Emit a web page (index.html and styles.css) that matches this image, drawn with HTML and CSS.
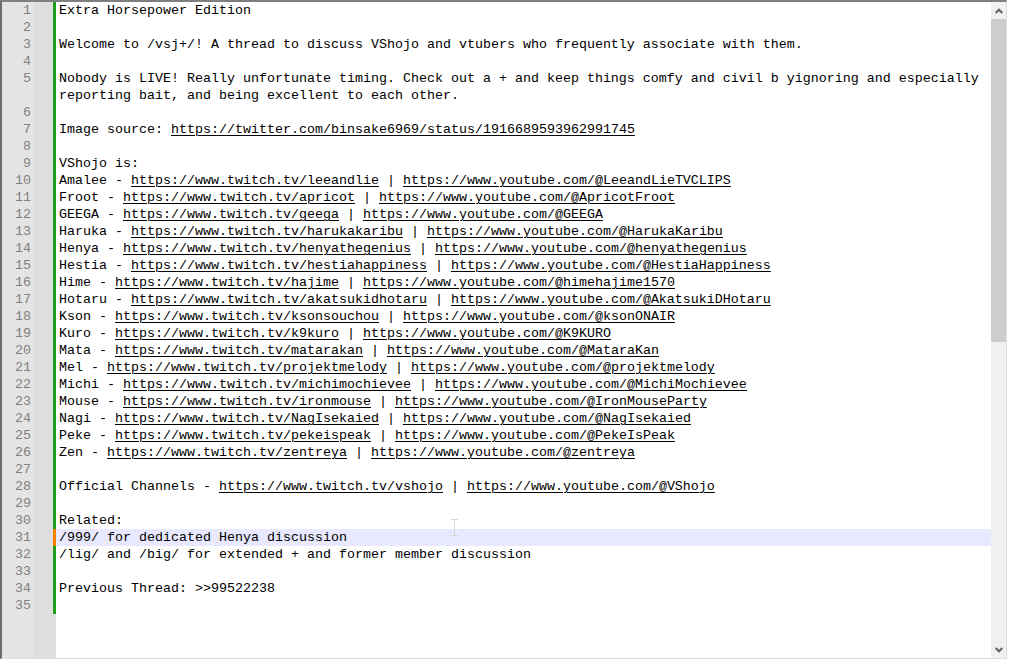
FILE: index.html
```html
<!DOCTYPE html>
<html>
<head>
<meta charset="utf-8">
<link rel="stylesheet" href="styles.css">
</head>
<body>
<div class="window">
  <div class="editor">
    <div class="line saved"><span class="num">1</span><span class="fold"></span><span class="bar"></span><span class="text">Extra Horsepower Edition</span></div>
    <div class="line saved"><span class="num">2</span><span class="fold"></span><span class="bar"></span><span class="text"></span></div>
    <div class="line saved"><span class="num">3</span><span class="fold"></span><span class="bar"></span><span class="text">Welcome to /vsj+/! A thread to discuss VShojo and vtubers who frequently associate with them.</span></div>
    <div class="line saved"><span class="num">4</span><span class="fold"></span><span class="bar"></span><span class="text"></span></div>
    <div class="line saved"><span class="num">5</span><span class="fold"></span><span class="bar"></span><span class="text">Nobody is LIVE! Really unfortunate timing. Check out a + and keep things comfy and civil b yignoring and especially<br>reporting bait, and being excellent to each other.</span></div>
    <div class="line saved"><span class="num">6</span><span class="fold"></span><span class="bar"></span><span class="text"></span></div>
    <div class="line saved"><span class="num">7</span><span class="fold"></span><span class="bar"></span><span class="text">Image source: <u>https://twitter.com/binsake6969/status/1916689593962991745</u></span></div>
    <div class="line saved"><span class="num">8</span><span class="fold"></span><span class="bar"></span><span class="text"></span></div>
    <div class="line saved"><span class="num">9</span><span class="fold"></span><span class="bar"></span><span class="text">VShojo is:</span></div>
    <div class="line saved"><span class="num">10</span><span class="fold"></span><span class="bar"></span><span class="text">Amalee - <u>https://www.twitch.tv/leeandlie</u> | <u>https://www.youtube.com/@LeeandLieTVCLIPS</u></span></div>
    <div class="line saved"><span class="num">11</span><span class="fold"></span><span class="bar"></span><span class="text">Froot - <u>https://www.twitch.tv/apricot</u> | <u>https://www.youtube.com/@ApricotFroot</u></span></div>
    <div class="line saved"><span class="num">12</span><span class="fold"></span><span class="bar"></span><span class="text">GEEGA - <u>https://www.twitch.tv/geega</u> | <u>https://www.youtube.com/@GEEGA</u></span></div>
    <div class="line saved"><span class="num">13</span><span class="fold"></span><span class="bar"></span><span class="text">Haruka - <u>https://www.twitch.tv/harukakaribu</u> | <u>https://www.youtube.com/@HarukaKaribu</u></span></div>
    <div class="line saved"><span class="num">14</span><span class="fold"></span><span class="bar"></span><span class="text">Henya - <u>https://www.twitch.tv/henyathegenius</u> | <u>https://www.youtube.com/@henyathegenius</u></span></div>
    <div class="line saved"><span class="num">15</span><span class="fold"></span><span class="bar"></span><span class="text">Hestia - <u>https://www.twitch.tv/hestiahappiness</u> | <u>https://www.youtube.com/@HestiaHappiness</u></span></div>
    <div class="line saved"><span class="num">16</span><span class="fold"></span><span class="bar"></span><span class="text">Hime - <u>https://www.twitch.tv/hajime</u> | <u>https://www.youtube.com/@himehajime1570</u></span></div>
    <div class="line saved"><span class="num">17</span><span class="fold"></span><span class="bar"></span><span class="text">Hotaru - <u>https://www.twitch.tv/akatsukidhotaru</u> | <u>https://www.youtube.com/@AkatsukiDHotaru</u></span></div>
    <div class="line saved"><span class="num">18</span><span class="fold"></span><span class="bar"></span><span class="text">Kson - <u>https://www.twitch.tv/ksonsouchou</u> | <u>https://www.youtube.com/@ksonONAIR</u></span></div>
    <div class="line saved"><span class="num">19</span><span class="fold"></span><span class="bar"></span><span class="text">Kuro - <u>https://www.twitch.tv/k9kuro</u> | <u>https://www.youtube.com/@K9KURO</u></span></div>
    <div class="line saved"><span class="num">20</span><span class="fold"></span><span class="bar"></span><span class="text">Mata - <u>https://www.twitch.tv/matarakan</u> | <u>https://www.youtube.com/@MataraKan</u></span></div>
    <div class="line saved"><span class="num">21</span><span class="fold"></span><span class="bar"></span><span class="text">Mel - <u>https://www.twitch.tv/projektmelody</u> | <u>https://www.youtube.com/@projektmelody</u></span></div>
    <div class="line saved"><span class="num">22</span><span class="fold"></span><span class="bar"></span><span class="text">Michi - <u>https://www.twitch.tv/michimochievee</u> | <u>https://www.youtube.com/@MichiMochievee</u></span></div>
    <div class="line saved"><span class="num">23</span><span class="fold"></span><span class="bar"></span><span class="text">Mouse - <u>https://www.twitch.tv/ironmouse</u> | <u>https://www.youtube.com/@IronMouseParty</u></span></div>
    <div class="line saved"><span class="num">24</span><span class="fold"></span><span class="bar"></span><span class="text">Nagi - <u>https://www.twitch.tv/NagIsekaied</u> | <u>https://www.youtube.com/@NagIsekaied</u></span></div>
    <div class="line saved"><span class="num">25</span><span class="fold"></span><span class="bar"></span><span class="text">Peke - <u>https://www.twitch.tv/pekeispeak</u> | <u>https://www.youtube.com/@PekeIsPeak</u></span></div>
    <div class="line saved"><span class="num">26</span><span class="fold"></span><span class="bar"></span><span class="text">Zen - <u>https://www.twitch.tv/zentreya</u> | <u>https://www.youtube.com/@zentreya</u></span></div>
    <div class="line saved"><span class="num">27</span><span class="fold"></span><span class="bar"></span><span class="text"></span></div>
    <div class="line saved"><span class="num">28</span><span class="fold"></span><span class="bar"></span><span class="text">Official Channels - <u>https://www.twitch.tv/vshojo</u> | <u>https://www.youtube.com/@VShojo</u></span></div>
    <div class="line saved"><span class="num">29</span><span class="fold"></span><span class="bar"></span><span class="text"></span></div>
    <div class="line saved"><span class="num">30</span><span class="fold"></span><span class="bar"></span><span class="text">Related:</span></div>
    <div class="line modified current"><span class="num">31</span><span class="fold"></span><span class="bar"></span><span class="text">/999/ for dedicated Henya discussion</span></div>
    <div class="line saved"><span class="num">32</span><span class="fold"></span><span class="bar"></span><span class="text">/lig/ and /big/ for extended + and former member discussion</span></div>
    <div class="line saved"><span class="num">33</span><span class="fold"></span><span class="bar"></span><span class="text"></span></div>
    <div class="line saved"><span class="num">34</span><span class="fold"></span><span class="bar"></span><span class="text">Previous Thread: &gt;&gt;99522238</span></div>
    <div class="line saved"><span class="num">35</span><span class="fold"></span><span class="bar"></span><span class="text"></span></div>
    <div class="line filler"><span class="num"></span><span class="fold"></span><span class="bar"></span><span class="text"></span></div>
    <svg class="ibeam" width="9" height="17" viewBox="0 0 9 17"><path d="M1 0.5h7M1 16.5h7M4.5 0.5v16" stroke="#d6d6d6" stroke-width="1" fill="none"/></svg>
  </div>
  <div class="scrollbar">
    <div class="sb-btn"><svg width="8" height="6" viewBox="0 0 8 6"><polyline points="0.7,5 4,1.7 7.3,5" stroke="#606060" stroke-width="2" fill="none"/></svg></div>
    <div class="sb-track"><div class="sb-thumb"></div></div>
    <div class="sb-btn"><svg width="8" height="6" viewBox="0 0 8 6"><polyline points="0.7,1 4,4.3 7.3,1" stroke="#606060" stroke-width="2" fill="none"/></svg></div>
  </div>
</div>
</body>
</html>
```

FILE: styles.css
```css
html, body {
  margin: 0;
  padding: 0;
  background: #ffffff;
}

.window {
  box-sizing: border-box;
  width: 1007px;
  height: 659px;
  border-top: 2px solid #7f7f7f;
  border-left: 2px solid #6a6a6a;
  border-right: 1px solid #dcdcdc;
  border-bottom: 1px solid #dcdcdc;
  display: flex;
  background: #ffffff;
  overflow: hidden;
}

.editor {
  flex: 1;
  display: flex;
  flex-direction: column;
  position: relative;
  font-family: "Liberation Mono", "Courier New", monospace;
  font-size: 13.333px;
  line-height: 17px;
  color: #000000;
}

.line {
  display: grid;
  grid-template-columns: 32px 19px 3px 1fr;
  min-height: 17px;
}

.num {
  background: #e4e4e4;
  color: #808080;
  text-align: right;
  padding-right: 3px;
}

.fold {
  background: #dedede;
}

.saved .bar {
  background: #1f9e1f;
}

.modified .bar {
  background: #ff8000;
}

.text {
  white-space: pre;
  padding-left: 3px;
  background: #ffffff;
}

.current .text {
  background: #e8e8ff;
}

.text u {
  text-decoration: underline;
  text-decoration-thickness: 1px;
  text-underline-offset: 2px;
}

.filler {
  flex: 1;
}

.filler .bar {
  background: #dedede;
}

.ibeam {
  position: absolute;
  left: 448px;
  top: 517px;
}

.scrollbar {
  width: 15px;
  display: flex;
  flex-direction: column;
  background: #f0f0f0;
}

.sb-btn {
  height: 17px;
  display: flex;
  align-items: center;
  justify-content: center;
}

.sb-track {
  flex: 1;
}

.sb-thumb {
  height: 323px;
  background: #cdcdcd;
}
```
